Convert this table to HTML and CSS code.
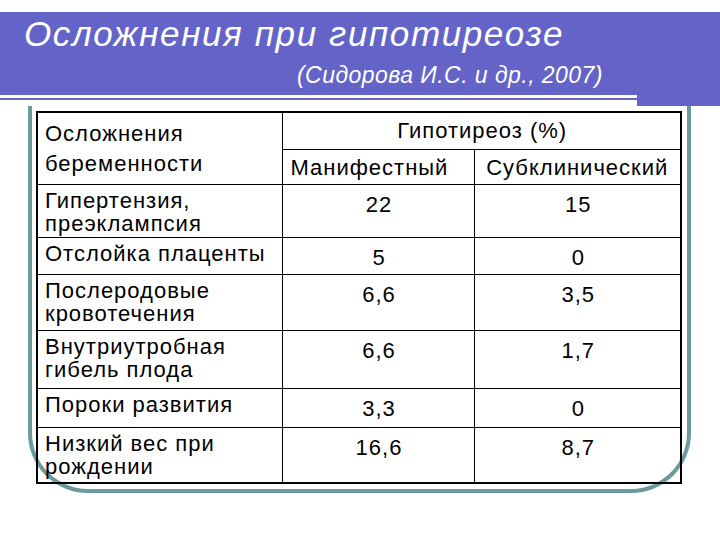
FILE: index.html
```html
<!DOCTYPE html>
<html lang="ru">
<head>
<meta charset="utf-8">
<title>Осложнения при гипотиреозе</title>
<link rel="stylesheet" href="styles.css">
</head>
<body>
<header class="band">
  <h1 class="title">Осложнения при гипотиреозе</h1>
  <p class="source">(Сидорова И.С. и др., 2007)</p>
</header>
<div class="frame">
  <table class="data">
    <colgroup>
      <col class="c1"><col class="c2"><col class="c3">
    </colgroup>
    <tr class="r-h1">
      <td rowspan="2" class="lbl head-lbl">Осложнения<br>беременности</td>
      <td colspan="2" class="num group">Гипотиреоз (%)</td>
    </tr>
    <tr class="r-h2">
      <td class="sub sub-m">Манифестный</td>
      <td class="sub">Субклинический</td>
    </tr>
    <tr class="r1">
      <td class="lbl">Гипертензия,<br>преэклампсия</td>
      <td class="num">22</td>
      <td class="num">15</td>
    </tr>
    <tr class="r2">
      <td class="lbl">Отслойка плаценты</td>
      <td class="num">5</td>
      <td class="num">0</td>
    </tr>
    <tr class="r3">
      <td class="lbl">Послеродовые<br>кровотечения</td>
      <td class="num">6,6</td>
      <td class="num">3,5</td>
    </tr>
    <tr class="r4">
      <td class="lbl">Внутриутробная<br>гибель плода</td>
      <td class="num">6,6</td>
      <td class="num">1,7</td>
    </tr>
    <tr class="r5">
      <td class="lbl">Пороки развития</td>
      <td class="num">3,3</td>
      <td class="num">0</td>
    </tr>
    <tr class="r6">
      <td class="lbl">Низкий вес при<br>рождении</td>
      <td class="num">16,6</td>
      <td class="num">8,7</td>
    </tr>
  </table>
</div>
</body>
</html>
```
FILE: styles.css
```css
html, body {
  margin: 0;
  padding: 0;
  background: #ffffff;
}
body {
  width: 720px;
  height: 540px;
  overflow: hidden;
  font-family: "Liberation Sans", Arial, sans-serif;
  color: #000;
}
.band {
  position: relative;
  margin-top: 12px;
  height: 88px;
  background: #6464c8;
  color: #fff;
}
.band::before {
  content: "";
  position: absolute;
  left: 0;
  top: 83px;
  width: 637px;
  height: 3px;
  background: #ffffff;
}
.band::after {
  content: "";
  position: absolute;
  left: 637px;
  right: 0;
  top: 88px;
  height: 6px;
  background: #6464c8;
}
.title {
  margin: 0;
  padding: 2px 0 0 24px;
  font-style: italic;
  font-weight: normal;
  font-size: 35px;
  line-height: 40px;
  letter-spacing: 1.6px;
}
.source {
  margin: 8px 0 0 297px;
  font-style: italic;
  font-size: 23px;
  line-height: 26px;
  letter-spacing: 0.45px;
}
.frame {
  margin: 6px 0 0 28px;
  width: 650px;
  padding: 5px 1px 5px 4px;
  border: 4px solid #6a9a9a;
  border-top: none;
  border-radius: 0 0 60px 60px;
}
.data {
  width: 644px;
  table-layout: fixed;
  border-collapse: collapse;
  border: 2px solid #000;
  font-size: 22px;
  line-height: 23px;
  letter-spacing: 1px;
}
.c1 { width: 245px; }
.c2 { width: 192px; }
.c3 { width: 207px; }
.data td {
  border: 1px solid #000;
  vertical-align: top;
  padding: 0;
}
.lbl {
  text-align: left;
  padding: 4px 0 0 7px !important;
}
.head-lbl {
  padding-top: 6px !important;
  line-height: 30px;
}
.num {
  text-align: center;
  padding-top: 8px !important;
  padding-left: 2px !important;
}
.group {
  padding-top: 6px !important;
}
.sub {
  text-align: center;
  padding-top: 6px !important;
}
.sub-m {
  text-align: left;
  padding-left: 8px !important;
}
.r-h1 { height: 37px; }
.r-h2 { height: 35px; }
.r1 { height: 53px; }
.r2 { height: 37px; }
.r3 { height: 56px; }
.r4 { height: 58px; }
.r5 { height: 39px; }
.r6 { height: 56px; }
```
